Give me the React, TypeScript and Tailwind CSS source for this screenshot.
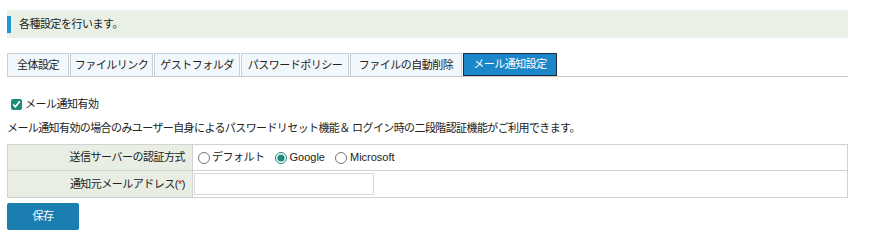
import React from "react";

const tabs = [
  { label: "全体設定", w: "w-[62px]" },
  { label: "ファイルリンク", w: "w-[83px]" },
  { label: "ゲストフォルダ", w: "w-[86px]" },
  { label: "パスワードポリシー", w: "w-[108px]" },
  { label: "ファイルの自動削除", w: "w-[112px]" },
];

export default function App() {
  return (
    <div
      className="w-[873px] h-[244px] bg-white text-[11px] text-[#222] overflow-hidden tracking-[-0.5px]"
      style={{ fontFamily: '"Liberation Sans", "Noto Sans CJK JP", sans-serif' }}
    >
      <div className="pl-[7px] pt-[10px] w-[848px]">
        <div className="h-[28px] bg-[#e9f1e6] flex items-center">
          <div className="w-[4px] h-[17px] bg-[#1c98d4]" />
          <span className="ml-[8px]">各種設定を行います。</span>
        </div>

        <div className="mt-[15px] flex items-end border-b border-[#c8c8c8] h-[24px]">
          {tabs.map((t) => (
            <div
              key={t.label}
              className={`${t.w} h-[23px] mr-[1px] flex items-center justify-center bg-[#f2f7fb] border border-b-0 border-[#c9d1d8] text-[#222]`}
            >
              {t.label}
            </div>
          ))}
          <div className="w-[94px] h-[23px] flex items-center justify-center bg-[#1b87c9] border border-[#1d2b3a] text-white">
            メール通知設定
          </div>
        </div>

        <label className="mt-[20px] ml-[4px] flex items-center h-[14px]">
          <input
            type="checkbox"
            defaultChecked
            className="w-[11px] h-[11px] m-0 accent-[#1f8c79]"
          />
          <span className="ml-[3px]">メール通知有効</span>
        </label>

        <div className="mt-[9px] h-[16px] flex items-center tracking-[-0.6px]">
          メール通知有効の場合のみユーザー自身によるパスワードリセット機能＆ ログイン時の二段階認証機能がご利用できます。
        </div>

        <div className="mt-[8px] border border-[#d2d2d2] w-[841px]">
          <div className="flex h-[26px] border-b border-[#d2d2d2]">
            <div className="w-[185px] bg-[#e8eee4] border-r border-[#d2d2d2] flex items-center justify-end pr-[7px]">
              送信サーバーの認証方式
            </div>
            <div className="flex items-center pl-[5px]">
              <label className="flex items-center">
                <input type="radio" name="auth" className="w-[12px] h-[12px] m-0 accent-[#1f8c79]" />
                <span className="ml-[2px]">デフォルト</span>
              </label>
              <label className="flex items-center ml-[10px]">
                <input type="radio" name="auth" defaultChecked className="w-[12px] h-[12px] m-0 accent-[#1f8c79]" />
                <span className="ml-[3px] tracking-normal">Google</span>
              </label>
              <label className="flex items-center ml-[10px]">
                <input type="radio" name="auth" className="w-[12px] h-[12px] m-0 accent-[#1f8c79]" />
                <span className="ml-[3px] tracking-normal">Microsoft</span>
              </label>
            </div>
          </div>
          <div className="flex h-[26px]">
            <div className="w-[185px] bg-[#e8eee4] border-r border-[#d2d2d2] flex items-center justify-end pr-[7px]">
              通知元メールアドレス(<span className="text-[#d0201a]">*</span>)
            </div>
            <div className="flex items-center pl-[1px]">
              <input
                type="text"
                className="w-[180px] h-[22px] border border-[#d8d8d8] bg-white outline-none"
              />
            </div>
          </div>
        </div>

        <button className="mt-[5px] w-[72px] h-[27px] rounded-[2px] bg-[#1a7eb1] text-white text-[11px] flex items-center justify-center">
          保存
        </button>
      </div>
    </div>
  );
}
